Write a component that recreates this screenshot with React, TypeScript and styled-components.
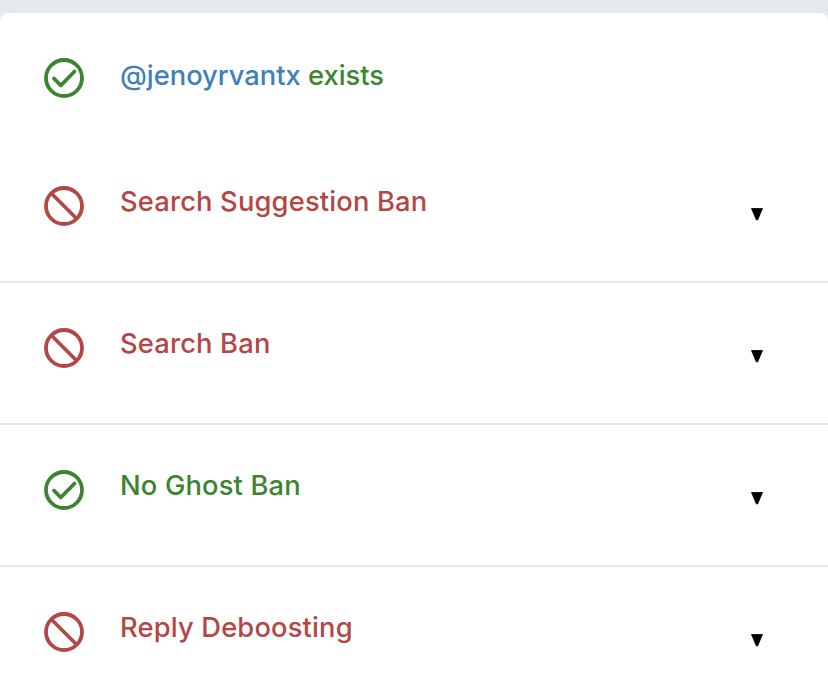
import React from "react";
import styled, { createGlobalStyle } from "styled-components";

const Global = createGlobalStyle`
  html, body { margin: 0; padding: 0; background: #e6eaee; overflow: hidden; }
  body { width: 828px; height: 696px; }
`;

const Page = styled.div`
  width: 828px;
  height: 696px;
  overflow: hidden;
  padding-top: 13px;
  box-sizing: border-box;
`;

const Card = styled.div`
  background: #fff;
  border-radius: 8px 8px 0 0;
  display: flex;
  flex-direction: column;
  height: 760px;
`;

const Row = styled.div<{ $first?: boolean; $last?: boolean }>`
  display: flex;
  align-items: flex-start;
  box-sizing: border-box;
  height: ${(p) => (p.$first ? 128 : 142)}px;
  padding: 45px 64px 0 44px;
  border-bottom: ${(p) => (p.$first || p.$last ? "none" : "2px solid #e3e5e9")};
`;

const IconSlot = styled.svg`
  width: 40px;
  height: 40px;
  flex: none;
  margin-right: 36px;
`;

const Label = styled.div<{ $tone: "ok" | "bad"; $first?: boolean }>`
  flex: 1;
  font-family: Inter, "Liberation Sans", sans-serif;
  font-size: 27.3px;
  font-weight: 450;
  letter-spacing: ${(p) => (p.$first ? 0 : 0.17)}px;
  line-height: 36px;
  margin-top: ${(p) => (p.$first ? 0 : -2)}px;
  color: ${(p) => (p.$tone === "ok" ? "#3c8430" : "#b34745")};
`;

const Handle = styled.span`
  color: #3f80b8;
`;

const Arrow = styled.svg`
  width: 14px;
  height: 14px;
  flex: none;
  margin-top: 21px;
`;

const Check = () => (
  <IconSlot viewBox="0 0 40 40" fill="none" stroke="#3c8430">
    <circle cx="20" cy="20" r="18" strokeWidth="3.8" />
    <path d="M10 20.5 L16.8 27.5 L30.5 13.5" strokeWidth="3.8" strokeLinecap="round" strokeLinejoin="round" />
  </IconSlot>
);

const Ban = () => (
  <IconSlot viewBox="0 0 40 40" fill="none" stroke="#b34745">
    <circle cx="20" cy="20" r="18" strokeWidth="3.8" />
    <path d="M7.5 7.5 L32.5 32.5" strokeWidth="3.8" />
  </IconSlot>
);

const Caret = () => (
  <Arrow viewBox="0 0 14 14">
    <path d="M1.5 1.5 H12.5 L7.6 13 H6.4 Z" fill="#000" stroke="#000" strokeWidth="0.8" strokeLinejoin="round" />
  </Arrow>
);

const rows: { text: string; tone: "ok" | "bad" }[] = [
  { text: "Search Suggestion Ban", tone: "bad" },
  { text: "Search Ban", tone: "bad" },
  { text: "No Ghost Ban", tone: "ok" },
  { text: "Reply Deboosting", tone: "bad" },
];

export default function App() {
  return (
    <Page>
      <Global />
      <Card>
        <Row $first>
          <Check />
          <Label $tone="ok" $first>
            <Handle>@jenoyrvantx</Handle> exists
          </Label>
        </Row>
        {rows.map((r, i) => (
          <Row key={r.text} $last={i === rows.length - 1}>
            {r.tone === "ok" ? <Check /> : <Ban />}
            <Label $tone={r.tone}>{r.text}</Label>
            <Caret />
          </Row>
        ))}
      </Card>
    </Page>
  );
}
